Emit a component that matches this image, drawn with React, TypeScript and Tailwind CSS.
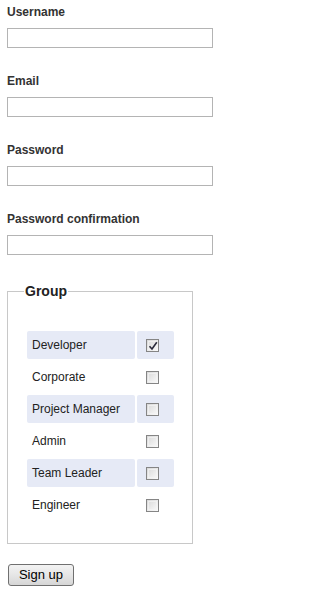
import React from "react";

const fields = ["Username", "Email", "Password", "Password confirmation"];

const groups = [
  { name: "Developer", checked: true },
  { name: "Corporate", checked: false },
  { name: "Project Manager", checked: false },
  { name: "Admin", checked: false },
  { name: "Team Leader", checked: false },
  { name: "Engineer", checked: false },
];

function Box({ checked }: { checked: boolean }) {
  return (
    <span className="relative block w-[13px] h-[13px] border border-[#858585] bg-gradient-to-br from-[#d8d8d8] to-[#fbfbfb]">
      <span className="absolute inset-[1px] border border-[#f4f4f4] opacity-70" />
      {checked && (
        <svg className="absolute left-[1px] top-[1px]" width="10" height="10" viewBox="0 0 10 10">
          <path d="M1.5 5.2 L4 8 L8.8 1.2" fill="none" stroke="#2b2b3b" strokeWidth="1.6" />
        </svg>
      )}
    </span>
  );
}

export default function App() {
  return (
    <div className="pl-[7px] pt-[5px] pb-[8px] bg-white text-[#222] font-['Liberation_Sans',Arial,sans-serif]">
      {/* text fields */}
      {fields.map((label) => (
        <div key={label} className="mb-[26px] last:mb-0">
          <label className="block text-[12px] leading-[14px] font-bold text-[#333] mb-[9px]">{label}</label>
          <input
            type={label.startsWith("Password") ? "password" : "text"}
            className="block w-[206px] h-[20px] border border-[#b4b4b4] bg-white outline-none"
          />
        </div>
      ))}

      {/* group checkboxes */}
      <fieldset className="mt-[28px] w-[186px] border border-[#c8c8c8] pl-[17px] pt-[28px] pb-[20px]">
        <legend className="-ml-[1px] px-[1px] text-[14px] leading-[16px] font-bold text-[#222]">Group</legend>
        <table className="border-separate border-spacing-x-[2px] border-spacing-y-[4.5px] text-[12px] text-[#222]">
          <tbody>
            {groups.map((g, i) => (
              <tr key={g.name}>
                <td className={`w-[108px] h-[28px] pl-[5px] rounded-[2px] ${i % 2 === 0 ? "bg-[#e6eaf6]" : ""}`}>
                  {g.name}
                </td>
                <td className={`w-[37px] h-[28px] pl-[9px] rounded-[2px] ${i % 2 === 0 ? "bg-[#e6eaf6]" : ""}`}>
                  <Box checked={g.checked} />
                </td>
              </tr>
            ))}
          </tbody>
        </table>
      </fieldset>

      <button className="mt-[20px] ml-[1px] w-[66px] h-[22px] border border-[#707070] rounded-[3px] bg-gradient-to-b from-[#f3f3f3] via-[#e6e6e6] to-[#d6d6d6] text-[13px] leading-[14px] text-black">
        Sign up
      </button>
    </div>
  );
}
